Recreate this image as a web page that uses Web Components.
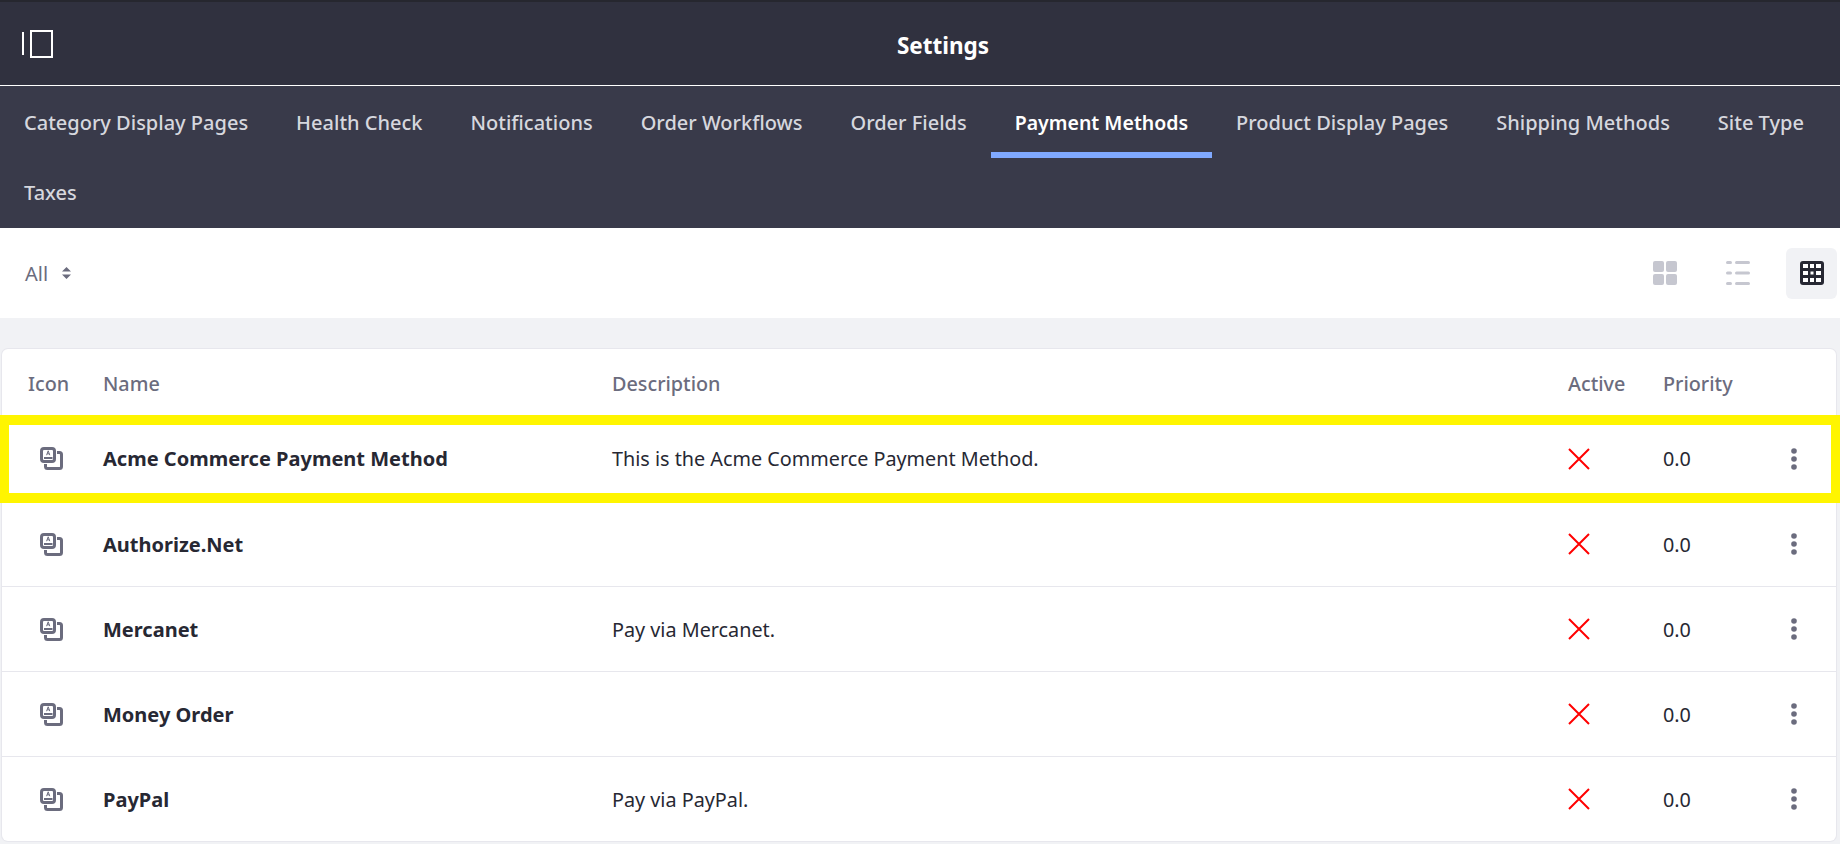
<!DOCTYPE html>
<html>
<head>
<meta charset="utf-8">
<title>Settings</title>
<style>
html, body { margin: 0; padding: 0; background: #f1f2f5; }
body { font-family: "Noto Sans", "Open Sans", sans-serif; width: 1840px; height: 844px; overflow: hidden; position: relative; }
</style>
</head>
<body>
<settings-page></settings-page>

<script>
class TopBar extends HTMLElement {
    constructor() {
        super()
        this.attachShadow({ mode: "open" })
        this.shadowRoot.innerHTML = `
        <style>
        :host { display: flex; align-items: center; height: 83px; background: #30313f; border-top: 2px solid #26272f; border-bottom: 1px solid #fff; padding-left: 22px; box-sizing: content-box; color: #fff; }
        svg { display: block; flex: none; }
        h1 { flex: 1; margin: 0; padding: 6px 8px 0 0; text-align: center; font: 700 22.500px/1 "Noto Sans", sans-serif; }
        </style>
        <svg width="32" height="28" viewBox="0 0 32 28" fill="none" stroke="#fff" stroke-width="2">
            <path d="M1 2v23"/>
            <rect x="9" y="1" width="21" height="26"/>
        </svg>
        <h1><slot></slot></h1>
        `
    }
}
customElements.define("top-bar", TopBar)

class NavTabs extends HTMLElement {
    constructor() {
        super()
        this.attachShadow({ mode: "open" })
        this.shadowRoot.innerHTML = `
        <style>
        :host { display: flex; flex-wrap: wrap; background: #393a4a; height: 142px; align-content: flex-start; }
        </style>
        <slot></slot>
        `
    }
}
customElements.define("nav-tabs", NavTabs)

class NavTab extends HTMLElement {
    constructor() {
        super()
        this.attachShadow({ mode: "open" })
        this.shadowRoot.innerHTML = `
        <style>
        :host { display: block; position: relative; height: 70px; box-sizing: border-box; padding: 1px 24px 0; line-height: 72px; font-size: 20px; font-weight: 500; color: #d6d7de; white-space: nowrap; }
        :host([active]) { color: #fff; font-size: 19.500px; font-weight: 600; }
        :host([active])::after { content: ""; position: absolute; left: 0; right: 0; top: 66px; height: 6px; background: #80a9ff; }
        </style>
        <slot></slot>
        `
    }
}
customElements.define("nav-tab", NavTab)

class ViewToolbar extends HTMLElement {
    constructor() {
        super()
        this.attachShadow({ mode: "open" })
        this.shadowRoot.innerHTML = `
        <style>
        :host { display: flex; align-items: center; height: 90px; background: #fff; padding: 0 3px 0 25px; }
        .filter { display: flex; align-items: center; gap: 14px; color: #6b6c7e; font-size: 20px; margin-right: auto; }
        .btn { width: 51px; height: 51px; border-radius: 6px; display: flex; align-items: center; justify-content: center; margin-left: 22px; }
        .btn.on { background: #f1f2f5; margin-left: 23px; }
        svg { display: block; }
        </style>
        <div class="filter">All
            <svg width="9" height="12" viewBox="0 0 9 12" fill="#6b6c7e"><path d="M4.5 0 9 4.6H0zM4.5 12 0 7.4h9z"/></svg>
        </div>
        <div class="btn">
            <svg width="24" height="24" viewBox="0 0 24 24" fill="#c6c7d0">
                <rect width="11" height="11" rx="2"/><rect x="13" width="11" height="11" rx="2"/>
                <rect y="13" width="11" height="11" rx="2"/><rect x="13" y="13" width="11" height="11" rx="2"/>
            </svg>
        </div>
        <div class="btn">
            <svg width="24" height="24" viewBox="0 0 24 24" fill="#c6c7d0">
                <rect y="0" width="6" height="3" rx="1.5"/><rect x="9" y="0" width="15" height="3" rx="1.5"/>
                <rect y="10.500" width="6" height="3" rx="1.5"/><rect x="9" y="10.500" width="15" height="3" rx="1.5"/>
                <rect y="21" width="6" height="3" rx="1.5"/><rect x="9" y="21" width="15" height="3" rx="1.5"/>
            </svg>
        </div>
        <div class="btn on">
            <svg width="24" height="24" viewBox="0 0 24 24">
                <rect width="24" height="24" rx="3" fill="#272833"/>
                <g fill="#fff">
                    <rect x="3" y="3" width="5" height="4"/><rect x="10" y="3" width="4" height="4"/><rect x="16" y="3" width="5" height="4"/>
                    <rect x="3" y="10" width="5" height="4"/><rect x="10.500" y="10.500" width="3" height="3"/><rect x="16" y="10" width="5" height="4"/>
                    <rect x="3" y="17" width="5" height="4"/><rect x="10" y="17" width="4" height="4"/><rect x="16" y="17" width="5" height="4"/>
                </g>
            </svg>
        </div>
        `
    }
}
customElements.define("view-toolbar", ViewToolbar)

class DataCard extends HTMLElement {
    constructor() {
        super()
        this.attachShadow({ mode: "open" })
        this.shadowRoot.innerHTML = `
        <style>
        :host { display: block; margin: 31px 4px 0 2px; background: #fff; border-radius: 6px; box-shadow: 0 0 0 1px #e7e7ed; --cols: 101px 509px 956px 95px 1fr; }
        .head { display: grid; grid-template-columns: var(--cols); align-items: center; height: 67px; box-sizing: border-box; padding-top: 2px; font-size: 19.800px; font-weight: 500; color: #6b6c7e; }
        .head span:first-child { padding-left: 26px; }
        </style>
        <div class="head"><span>Icon</span><span>Name</span><span>Description</span><span>Active</span><span>Priority</span></div>
        <slot></slot>
        `
    }
}
customElements.define("data-card", DataCard)

class MethodRow extends HTMLElement {
    constructor() {
        super()
        this.attachShadow({ mode: "open" })
        this.shadowRoot.innerHTML = `
        <style>
        :host { display: grid; grid-template-columns: var(--cols); align-items: center; height: 85px; box-sizing: border-box; border-top: 1px solid #e7e7ed; font-size: 19.800px; color: #272833; }
        :host([first]) { border-top: 0; }
        .ico { padding-left: 37px; }
        svg { display: block; }
        .name { font-weight: 700; font-size: 20px; }
        .end { display: flex; align-items: center; justify-content: space-between; padding-right: 39px; }
        </style>
        <div class="ico">
            <svg width="25" height="25" viewBox="0 0 25 25" fill="none" stroke="#6b6c7e" stroke-width="3">
                <rect x="2.500" y="2.500" width="13" height="13" rx="2.500"/>
                <path d="M18 6.500h2.500a2 2 0 0 1 2 2v12a2 2 0 0 1-2 2h-12a2 2 0 0 1-2-2V18"/>
                <path d="M7.600 9.200 9.200 4.800l1.600 4.400M8.200 7.800h2" stroke-width="1"/>
                <path d="M5 12h8.500" stroke-width="2"/>
            </svg>
        </div>
        <div class="name"><slot name="name"></slot></div>
        <div><slot name="desc"></slot></div>
        <div>
            <svg width="22" height="22" viewBox="0 0 22 22" fill="none" stroke="#f00" stroke-width="2"><path d="M1 1l20 20M21 1 1 21"/></svg>
        </div>
        <div class="end"><span>0.0</span>
            <svg width="6" height="22" viewBox="0 0 6 22" fill="#6b6c7e"><circle cx="3" cy="3" r="2.800"/><circle cx="3" cy="11" r="2.800"/><circle cx="3" cy="19" r="2.800"/></svg>
        </div>
        `
    }
}
customElements.define("method-row", MethodRow)

class HighlightBox extends HTMLElement {
    constructor() {
        super()
        this.attachShadow({ mode: "open" })
        this.shadowRoot.innerHTML = `
        <style>
        :host { display: block; position: absolute; left: 0; top: 415px; width: 1840px; height: 88px; box-sizing: border-box; border: 10px solid #fff500; border-left-width: 9px; border-right-width: 9px; pointer-events: none; }
        </style>
        `
    }
}
customElements.define("highlight-box", HighlightBox)

class SettingsPage extends HTMLElement {
    constructor() {
        super()
        this.attachShadow({ mode: "open" })
        this.shadowRoot.innerHTML = `
        <style>
        :host { display: block; }
        </style>
        <top-bar>Settings</top-bar>
        <nav-tabs>
            <nav-tab>Category Display Pages</nav-tab>
            <nav-tab>Health Check</nav-tab>
            <nav-tab>Notifications</nav-tab>
            <nav-tab>Order Workflows</nav-tab>
            <nav-tab>Order Fields</nav-tab>
            <nav-tab active>Payment Methods</nav-tab>
            <nav-tab>Product Display Pages</nav-tab>
            <nav-tab>Shipping Methods</nav-tab>
            <nav-tab>Site Type</nav-tab>
            <nav-tab>Taxes</nav-tab>
        </nav-tabs>
        <view-toolbar></view-toolbar>
        <data-card>
            <method-row first><span slot="name">Acme Commerce Payment Method</span><span slot="desc">This is the Acme Commerce Payment Method.</span></method-row>
            <method-row><span slot="name">Authorize.Net</span></method-row>
            <method-row><span slot="name">Mercanet</span><span slot="desc">Pay via Mercanet.</span></method-row>
            <method-row><span slot="name">Money Order</span></method-row>
            <method-row><span slot="name">PayPal</span><span slot="desc">Pay via PayPal.</span></method-row>
        </data-card>
        <highlight-box></highlight-box>
        `
    }
}
customElements.define("settings-page", SettingsPage)
</script>
</body>
</html>
